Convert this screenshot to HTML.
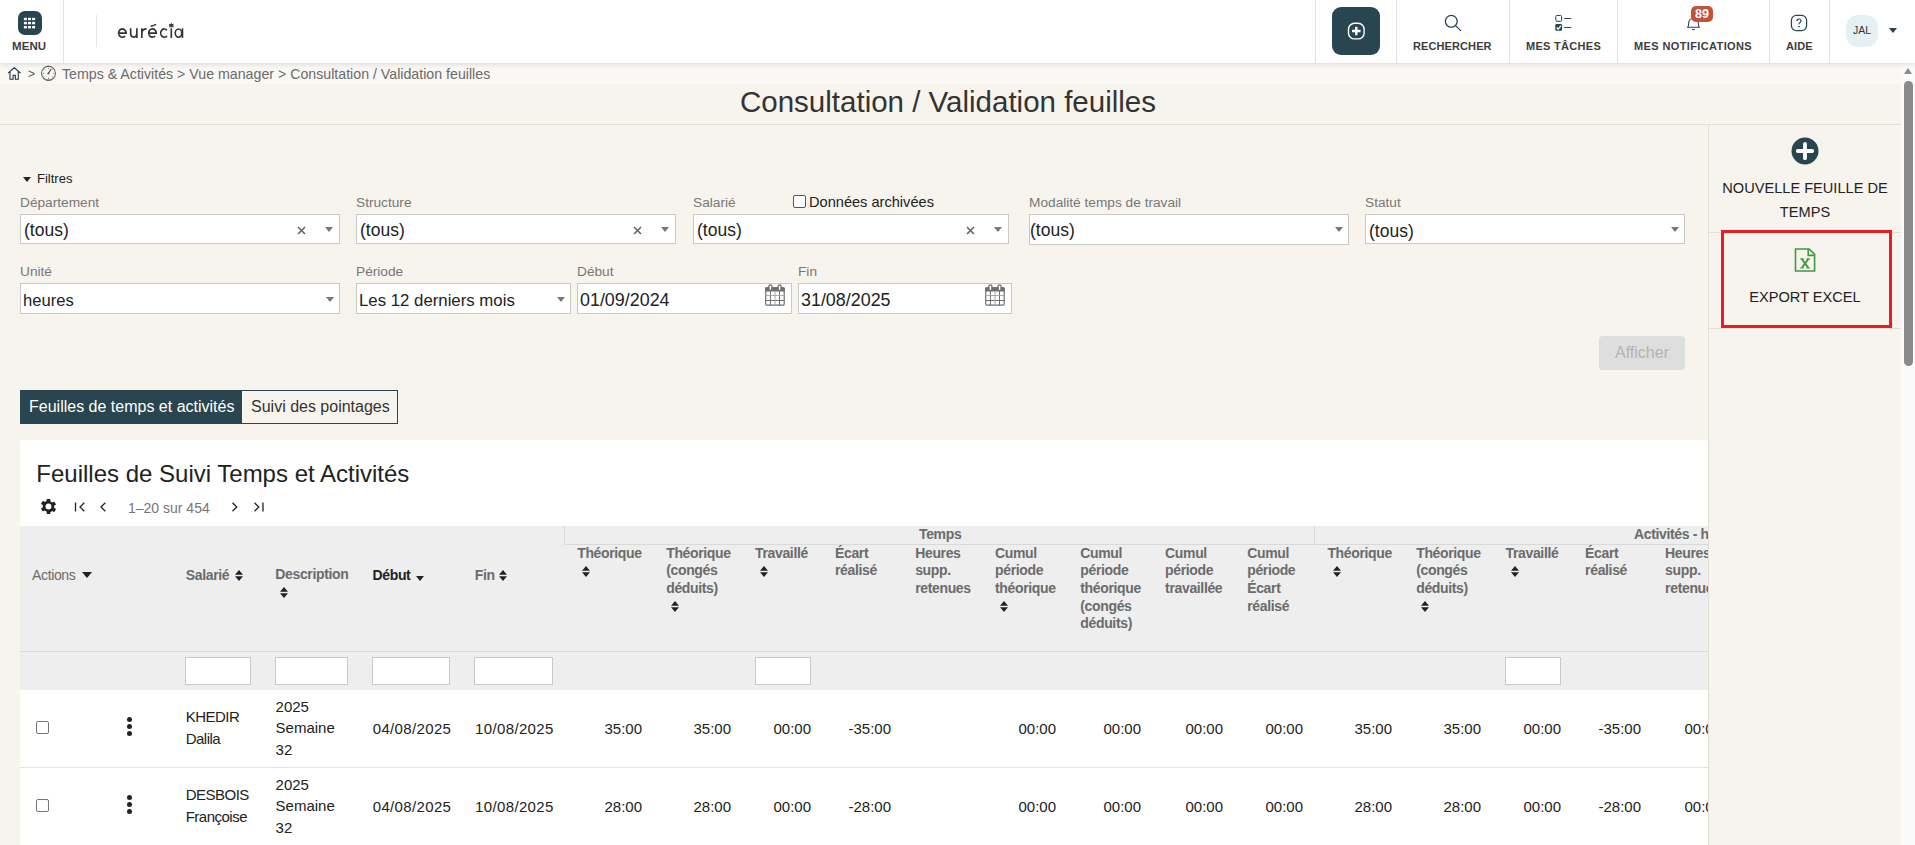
<!DOCTYPE html>
<html><head><meta charset="utf-8">
<style>
*{box-sizing:border-box;margin:0;padding:0}
html,body{width:1915px;height:845px;overflow:hidden;background:#f7f4ee;font-family:"Liberation Sans",sans-serif;color:#222}
.abs{position:absolute}
#hdr{position:absolute;left:0;top:0;width:1915px;height:63px;background:#fff;box-shadow:0 1px 5px rgba(30,45,50,.16);z-index:5}
.vsep{position:absolute;top:0;width:1px;height:63px;background:#e6e2d8}
.hlbl{position:absolute;top:39px;font-size:11px;font-weight:bold;color:#3d3d3d;letter-spacing:0.1px;white-space:nowrap;line-height:14px}
.lbl{position:absolute;font-size:13.7px;color:#777;white-space:nowrap;line-height:15px}
.sel{position:absolute;height:30px;background:#fff;border:1px solid #c9c9c9}
.sel .v{position:absolute;left:3px;top:5px;font-size:17.5px;color:#222;line-height:20px;white-space:nowrap}
.x{position:absolute;top:10.5px;width:9px;height:9px;margin-left:0.8px}
.dd{position:absolute;top:12px;margin-left:1px;width:0;height:0;border-left:4.5px solid transparent;border-right:4.5px solid transparent;border-top:5px solid #777}
.th{position:absolute;font-size:14px;font-weight:bold;color:#6b6b6b;line-height:17.65px;white-space:nowrap;letter-spacing:-0.35px}
.sort{display:block;width:8px;height:12px}
.td{position:absolute;font-size:15px;color:#222;line-height:21.7px;white-space:nowrap}
.fin{position:absolute;top:657px;height:28px;background:#fff;border:1px solid #c9c9c9}
</style></head><body>

<!-- HEADER -->
<div id="hdr">
  <div class="abs" style="left:18px;top:11px;width:24px;height:24px;border-radius:7px;background:#29454f">
    <svg width="24" height="24" viewBox="0 0 24 24" style="position:absolute;left:0;top:0">
      <g fill="#fff"><rect x="5.9" y="6.8" width="3" height="2.4"/><rect x="10" y="6.8" width="3" height="2.4"/><rect x="14.1" y="6.8" width="3" height="2.4"/><rect x="5.9" y="10.9" width="3" height="2.4"/><rect x="10" y="10.9" width="3" height="2.4"/><rect x="14.1" y="10.9" width="3" height="2.4"/><rect x="5.9" y="15.0" width="3" height="2.4"/><rect x="10" y="15.0" width="3" height="2.4"/><rect x="14.1" y="15.0" width="3" height="2.4"/></g>
    </svg>
  </div>
  <div class="hlbl" style="left:12px;top:39px;font-size:11.5px">MENU</div>
  <div class="vsep" style="left:63px;background:#e8e4da"></div>
  <div class="abs" style="left:96px;top:15px;width:1px;height:32px;background:#e6e6e6"></div>
  <svg class="abs" style="left:110px;top:15px" width="80" height="30" viewBox="0 0 80 30"><g fill="none" stroke="#333" stroke-width="1.65">
<path d="M8.5 18.1H16.2A3.85 4.15 0 1 0 15.1 21.0"/>
<path d="M20.65 13.3V18.8A3.1 3.3 0 0 0 26.85 18.8M26.85 13.3V22.9"/>
<path d="M31.85 13.3V22.9M31.85 17.8Q32.3 13.9 36.6 13.9"/>
<path d="M38.65 18.1H46.35A3.85 4.15 0 1 0 45.2 21.0"/>
<path d="M40.6 11.3Q44 10.6 46.1 9.4" stroke-width="1.4"/>
<path d="M57.0 15.3A3.6 4.15 0 1 0 57.0 20.9"/>
<path d="M61.3 13.3V22.9"/>
<ellipse cx="68.5" cy="18.1" rx="3.25" ry="4.15"/>
<path d="M72.45 13.3V22.9"/>
<path d="M61.35 8.2V11.6M59.2 9.2L63.5 10.8M63.5 9.2L59.2 10.8M59.1 11.7H63.6" stroke-width="1.1"/>
</g></svg>

  <div class="vsep" style="left:1315px"></div>
  <div class="abs" style="left:1332px;top:7px;width:48px;height:48px;border-radius:9px;background:#29454f">
    <svg width="48" height="48" viewBox="0 0 48 48" style="position:absolute;left:0;top:0">
      <rect x="16.5" y="16.3" width="15.6" height="15.6" rx="6" fill="none" stroke="#fff" stroke-width="1.4"/>
      <path d="M24.3 19.8v8.4M20 24h8.6" stroke="#fff" stroke-width="2.3"/>
    </svg>
  </div>
  <div class="vsep" style="left:1396px"></div>
  <svg class="abs" style="left:1444px;top:14px" width="18" height="18" viewBox="0 0 18 18">
    <circle cx="7.3" cy="7.3" r="5.9" fill="none" stroke="#29454f" stroke-width="1.3"/>
    <path d="M11.6 11.6l5 5" stroke="#29454f" stroke-width="1.3" stroke-linecap="round"/>
  </svg>
  <div class="hlbl" style="left:1413px">RECHERCHER</div>
  <div class="vsep" style="left:1509px"></div>
  <svg class="abs" style="left:1554px;top:14px" width="18" height="18" viewBox="0 0 18 18">
    <rect x="1.8" y="1.5" width="5.8" height="5.8" rx="1" fill="none" stroke="#29454f" stroke-width="1"/>
    <rect x="1.3" y="10" width="6.8" height="6.7" rx="1.2" fill="#29454f"/>
    <path d="M2.7 13.5l1.5 1.7 2.8-3.6" stroke="#fff" stroke-width="1.2" fill="none"/>
    <path d="M10.2 4.5h7.1M10.2 13.5h7.1" stroke="#29454f" stroke-width="1"/>
  </svg>
  <div class="hlbl" style="left:1526px;letter-spacing:0.3px">MES T&Acirc;CHES</div>
  <div class="vsep" style="left:1617px"></div>
  <svg class="abs" style="left:1686px;top:15px" width="15" height="16" viewBox="0 0 15 16">
    <path d="M1.5 12.2c1-0.6 1.2-2 1.2-4.2 0-2.7 1.9-4.8 4.8-4.8s4.8 2.1 4.8 4.8c0 2.2.2 3.6 1.2 4.2z" fill="none" stroke="#29454f" stroke-width="1.1" stroke-linejoin="round"/>
    <path d="M6.2 14.2q1.3 1.1 2.6 0" fill="none" stroke="#29454f" stroke-width="1.1"/>
  </svg>
  <div class="abs" style="left:1691px;top:6px;width:22px;height:16px;border-radius:5px;background:#c4523a;color:#fff;font-size:12.5px;font-weight:bold;text-align:center;line-height:17px">89</div>
  <div class="hlbl" style="left:1634px;letter-spacing:0.38px">MES NOTIFICATIONS</div>
  <div class="vsep" style="left:1769px"></div>
  <svg class="abs" style="left:1790px;top:14px" width="18" height="18" viewBox="0 0 18 18">
    <rect x="1.4" y="1.4" width="15.2" height="15.2" rx="5" fill="none" stroke="#29454f" stroke-width="1.2"/>
    <path d="M7 7.1q0-2.1 2-2.1t2 1.9q0 1.2-1.2 1.8-.8.4-.8 1.5" fill="none" stroke="#29454f" stroke-width="1.2"/>
    <circle cx="9" cy="12.6" r="0.8" fill="#29454f"/>
  </svg>
  <div class="hlbl" style="left:1786px">AIDE</div>
  <div class="vsep" style="left:1829px"></div>
  <div class="abs" style="left:1846px;top:15px;width:32px;height:32px;border-radius:12px;background:#e5f0f2;color:#333;font-size:10.5px;text-align:center;line-height:31px">JAL</div>
  <div class="abs" style="left:1889px;top:28px;width:0;height:0;border-left:4px solid transparent;border-right:4px solid transparent;border-top:5px solid #29454f"></div>
</div>

<!-- breadcrumb band -->
<div class="abs" style="left:0;top:63px;width:1901px;height:21px;background:#faf8f4"></div>
<svg class="abs" style="left:7px;top:66.6px" width="14" height="14" viewBox="0 0 14 14">
  <path d="M1 6.2L7.3 0.8 13.6 6.2M3 4.6V12.2H6.1V8.2H8.3V12.2H11.3V4.6" fill="none" stroke="#1f2f38" stroke-width="1.05" stroke-linejoin="miter"/>
</svg>
<div class="abs" style="left:28px;top:67px;font-size:12px;color:#555;line-height:14px">&gt;</div>
<svg class="abs" style="left:40px;top:65px" width="17" height="17" viewBox="0 0 17 17">
  <circle cx="8.5" cy="8.3" r="7" fill="none" stroke="#666" stroke-width="1.1"/>
  <path d="M6.6 1.4h3.8M6.6 15.2h3.8" stroke="#555" stroke-width="1"/>
  <g fill="#666"><circle cx="3.3" cy="8.3" r="0.6"/><circle cx="13.7" cy="8.3" r="0.6"/><circle cx="8.5" cy="13.3" r="0.6"/><circle cx="8.5" cy="3.4" r="0.5"/>
  <circle cx="4.9" cy="4.8" r="0.45"/><circle cx="12.1" cy="4.8" r="0.45"/><circle cx="4.9" cy="11.8" r="0.45"/><circle cx="12.1" cy="11.8" r="0.45"/></g>
  <path d="M8.4 8.4L11 4.2" stroke="#555" stroke-width="1.2" stroke-linecap="round"/>
  <circle cx="8.4" cy="8.4" r="1" fill="#555"/>
</svg>
<div class="abs" style="left:62px;top:65.5px;font-size:14.2px;color:#6b6b6b;line-height:16px;white-space:nowrap">Temps &amp; Activit&eacute;s &gt; Vue manager &gt; Consultation / Validation feuilles</div>

<!-- Title -->
<div class="abs" style="left:0;top:84px;width:1901px;height:41px;border-bottom:1px solid #e2dfd7"></div>
<div class="abs" style="left:740px;top:86.2px;font-size:29.5px;color:#333;line-height:32px;white-space:nowrap">Consultation / Validation feuilles</div>

<!-- sidebar -->
<div class="abs" style="left:1708px;top:125px;width:1px;height:720px;background:#e2dfd7"></div>
<svg class="abs" style="left:1791px;top:137px" width="28" height="28" viewBox="0 0 28 28">
  <circle cx="14" cy="14" r="13.5" fill="#29454f"/>
  <path d="M14 6.8v14.4M6.8 14h14.4" stroke="#fff" stroke-width="3.8" stroke-linecap="round"/>
</svg>
<div class="abs" style="left:1709px;top:176px;width:192px;text-align:center;font-size:14.6px;color:#222;line-height:24px">NOUVELLE FEUILLE DE<br>TEMPS</div>
<div class="abs" style="left:1709px;top:232px;width:192px;height:1px;background:#e2dfd7"></div>
<svg class="abs" style="left:1794px;top:248px" width="22" height="24" viewBox="0 0 22 24">
  <g fill="none" stroke="#3f9a40" stroke-width="1.6">
  <path d="M1.5 1H15.2L20.6 6.4V23H1.5Z" stroke-linejoin="miter"/>
  <path d="M14.2 1V7.4H20.6"/>
  <path d="M8 11.2L14.2 19.6M14.2 11.2L8 19.6" stroke-width="1.9"/>
  <path d="M6.4 11H9.6M12.6 11H15.8M6.4 19.8H9.6M12.6 19.8H15.8" stroke-width="1.3"/>
  </g>
</svg>
<div class="abs" style="left:1709px;top:285px;width:192px;text-align:center;font-size:14.6px;color:#222;line-height:24px">EXPORT EXCEL</div>
<div class="abs" style="left:1709px;top:328px;width:192px;height:1px;background:#e2dfd7"></div>
<div class="abs" style="left:1721px;top:230px;width:171px;height:98px;border:3px solid #e41e25"></div>

<!-- scrollbar -->
<div class="abs" style="left:1901px;top:63px;width:14px;height:782px;background:#fafafa"></div>
<div class="abs" style="left:1904px;top:68px;width:0;height:0;border-left:4.5px solid transparent;border-right:4.5px solid transparent;border-bottom:6px solid #8a8a8a"></div>
<div class="abs" style="left:1904px;top:81px;width:9px;height:285px;border-radius:4.5px;background:#8a8a8a"></div>

<!-- FILTERS -->
<div class="abs" style="left:23px;top:176.5px;width:0;height:0;border-left:4.5px solid transparent;border-right:4.5px solid transparent;border-top:5px solid #222"></div>
<div class="abs" style="left:37px;top:171px;font-size:13px;color:#222;line-height:15px">Filtres</div>

<div class="lbl" style="left:20px;top:195px">D&eacute;partement</div>
<div class="sel" style="left:20px;top:214px;width:320px;height:30px"><div class="v">(tous)</div>
  <svg class="x" style="left:275px" viewBox="0 0 9 9"><path d="M1 1l7 7M8 1L1 8" stroke="#666" stroke-width="1.6"/></svg>
  <div class="dd" style="left:303px"></div></div>

<div class="lbl" style="left:356px;top:195px">Structure</div>
<div class="sel" style="left:356px;top:214px;width:320px;height:30px"><div class="v">(tous)</div>
  <svg class="x" style="left:275px" viewBox="0 0 9 9"><path d="M1 1l7 7M8 1L1 8" stroke="#666" stroke-width="1.6"/></svg>
  <div class="dd" style="left:303px"></div></div>

<div class="lbl" style="left:693px;top:195px">Salari&eacute;</div>
<div class="abs" style="left:793px;top:195px;width:13px;height:13px;border:1px solid #555;border-radius:2px;background:#fff"></div>
<div class="abs" style="left:809px;top:194px;font-size:14.6px;color:#222;line-height:17px;white-space:nowrap">Donn&eacute;es archiv&eacute;es</div>
<div class="sel" style="left:693px;top:214px;width:316px;height:30px"><div class="v">(tous)</div>
  <svg class="x" style="left:271px" viewBox="0 0 9 9"><path d="M1 1l7 7M8 1L1 8" stroke="#666" stroke-width="1.6"/></svg>
  <div class="dd" style="left:299px"></div></div>

<div class="lbl" style="left:1029px;top:195px">Modalit&eacute; temps de travail</div>
<div class="sel" style="left:1029px;top:214px;width:320px;height:31px"><div class="v" style="left:0px">(tous)</div>
  <div class="dd" style="left:304px"></div></div>

<div class="lbl" style="left:1365px;top:195px">Statut</div>
<div class="sel" style="left:1365px;top:214px;width:320px;height:30px"><div class="v" style="top:6px">(tous)</div>
  <div class="dd" style="left:304px"></div></div>

<div class="lbl" style="left:20px;top:264px">Unit&eacute;</div>
<div class="sel" style="left:20px;top:283px;width:320px;height:31px"><div class="v" style="left:2px;top:7px;font-size:16.6px">heures</div>
  <div class="dd" style="left:304px;top:13px"></div></div>

<div class="lbl" style="left:356px;top:264px">P&eacute;riode</div>
<div class="sel" style="left:356px;top:283px;width:215px;height:31px"><div class="v" style="left:2px;top:7px;font-size:16.8px">Les 12 derniers mois</div>
  <div class="dd" style="left:199px;top:13px"></div></div>

<div class="lbl" style="left:577px;top:264px">D&eacute;but</div>
<div class="sel" style="left:577px;top:283px;width:215px;height:31px"><div class="v" style="left:2px;top:5.5px;font-size:17.9px">01/09/2024</div>
  <svg class="abs" style="left:186px;top:0px" width="22" height="23" viewBox="0 0 22 23"><g>
    <rect x="1.7" y="3.8" width="18.5" height="17.4" rx="1.3" fill="#fff" stroke="#6f6f6f" stroke-width="1.2"/>
    <rect x="1.1" y="3.2" width="19.7" height="4.4" rx="1" fill="#6f6f6f"/>
    <path d="M6.4 7v14.5M15.5 7v14.5M1.5 16.5h19" stroke="#6f6f6f" stroke-width="1"/>
    <path d="M11 7v14.5M1.5 11.5h19" stroke="#a8a8a8" stroke-width="1"/>
    <rect x="4.3" y="0.2" width="4.2" height="6.2" rx="2.1" fill="#6f6f6f"/><rect x="5.65" y="1.5" width="1.5" height="4.6" rx="0.75" fill="#fff"/>
    <rect x="13.5" y="0.2" width="4.2" height="6.2" rx="2.1" fill="#6f6f6f"/><rect x="14.85" y="1.5" width="1.5" height="4.6" rx="0.75" fill="#fff"/>
    </g></svg>
</div>

<div class="lbl" style="left:798px;top:264px">Fin</div>
<div class="sel" style="left:798px;top:283px;width:214px;height:31px"><div class="v" style="left:2px;top:5.5px;font-size:17.9px">31/08/2025</div>
  <svg class="abs" style="left:185px;top:0px" width="22" height="23" viewBox="0 0 22 23"><g>
    <rect x="1.7" y="3.8" width="18.5" height="17.4" rx="1.3" fill="#fff" stroke="#6f6f6f" stroke-width="1.2"/>
    <rect x="1.1" y="3.2" width="19.7" height="4.4" rx="1" fill="#6f6f6f"/>
    <path d="M6.4 7v14.5M15.5 7v14.5M1.5 16.5h19" stroke="#6f6f6f" stroke-width="1"/>
    <path d="M11 7v14.5M1.5 11.5h19" stroke="#a8a8a8" stroke-width="1"/>
    <rect x="4.3" y="0.2" width="4.2" height="6.2" rx="2.1" fill="#6f6f6f"/><rect x="5.65" y="1.5" width="1.5" height="4.6" rx="0.75" fill="#fff"/>
    <rect x="13.5" y="0.2" width="4.2" height="6.2" rx="2.1" fill="#6f6f6f"/><rect x="14.85" y="1.5" width="1.5" height="4.6" rx="0.75" fill="#fff"/>
    </g></svg>
</div>

<div class="abs" style="left:1599px;top:336px;width:86px;height:34px;border-radius:4px;background:#dedede;color:#b3b3b3;font-size:16px;line-height:34px;text-align:center">Afficher</div>

<!-- tabs -->
<div class="abs" style="left:20px;top:390px;width:378px;height:34px;border:1px solid #29454f;background:#f7f4ee"></div>
<div class="abs" style="left:20px;top:390px;width:222px;height:34px;background:#29454f;color:#fff;font-size:16px;line-height:34px;padding-left:9px;white-space:nowrap">Feuilles de temps et activit&eacute;s</div>
<div class="abs" style="left:251px;top:390px;font-size:16px;line-height:34px;color:#333;white-space:nowrap">Suivi des pointages</div>

<!-- TABLE PANEL -->
<div class="abs" style="left:20px;top:440px;width:1688px;height:405px;background:#fff;overflow:hidden">
<div class="abs" style="left:16.3px;top:21px;font-size:24px;color:#222;line-height:26px;white-space:nowrap">Feuilles de Suivi Temps et Activit&eacute;s</div>
<svg class="abs" style="left:20px;top:58px" width="17" height="17" viewBox="0 0 16 16">
  <path fill="#222" fill-rule="evenodd" d="M6.3 1h3.4v2.1l1.9 1.1 1.8-1 1.7 2.9-1.8 1.1v2.1l1.8 1.1-1.7 2.9-1.8-1-1.9 1.1V15H6.3v-2.1l-1.9-1.1-1.8 1L.9 9.9l1.8-1.1V6.7L.9 5.6l1.7-2.9 1.8 1 1.9-1.1zM8 5.2a2.8 2.8 0 100 5.6 2.8 2.8 0 100-5.6z"/>
</svg>
<svg class="abs" style="left:53.7px;top:61.6px" width="12" height="10" viewBox="0 0 12 10"><path d="M1.5 0.5v9M10.3 0.7L6 5l4.3 4.3" fill="none" stroke="#222" stroke-width="1.3"/></svg>
<svg class="abs" style="left:79.3px;top:61.6px" width="8" height="10" viewBox="0 0 8 10"><path d="M6.3 0.7L2 5l4.3 4.3" fill="none" stroke="#222" stroke-width="1.3"/></svg>
<div class="abs" style="left:108px;top:60px;font-size:14px;color:#757575;line-height:17px;white-space:nowrap">1&ndash;20 sur 454</div>
<svg class="abs" style="left:211px;top:62px" width="8" height="10" viewBox="0 0 8 10"><path d="M1.5 0.7L5.8 5 1.5 9.3" fill="none" stroke="#222" stroke-width="1.3"/></svg>
<svg class="abs" style="left:233.3px;top:61.8px" width="12" height="10" viewBox="0 0 12 10"><path d="M1.5 0.7L5.8 5 1.5 9.3M10 0.5v9" fill="none" stroke="#222" stroke-width="1.3"/></svg>

<!-- header bg -->
<div class="abs" style="left:0;top:86px;width:1688px;height:125px;background:#eee"></div>
<div class="abs" style="left:0;top:211px;width:1688px;height:1px;background:#d9d9d9"></div>
<div class="abs" style="left:0;top:212px;width:1688px;height:38px;background:#eee"></div>
<div class="abs" style="left:0;top:327px;width:1688px;height:1px;background:#e3e3e3"></div>
<!-- group headers -->
<div class="abs" style="left:544px;top:86px;width:751px;height:19px;border-left:1px solid #d9d9d9;border-right:1px solid #d9d9d9;border-bottom:1px solid #d9d9d9"></div>
<div class="abs" style="left:1295px;top:104px;width:400px;height:1px;background:#d9d9d9"></div>
<div class="th" style="left:899px;top:86px">Temps</div>
<div class="th" style="left:1614px;top:86px">Activit&eacute;s - heures</div>
<!--COLSTART-->
<div class="th" style="left:12px;top:127.0px;font-weight:normal">Actions</div>
<div class="abs" style="left:61.8px;top:131.6px;width:0;height:0;border-left:5px solid transparent;border-right:5px solid transparent;border-top:6px solid #222"></div>
<div class="th" style="left:165.8px;top:127.0px">Salari&eacute;</div>
<svg class="abs" style="left:214.8px;top:129.5px" width="8" height="12" viewBox="0 0 8 12"><path d="M0 4.7L4 0 8 4.7zM0 6.3h8L4 11z" fill="#222"/></svg>
<div class="th" style="left:255.3px;top:125.9px">Description</div>
<svg class="abs" style="left:260.4px;top:146.7px" width="8" height="12" viewBox="0 0 8 12"><path d="M0 4.7L4 0 8 4.7zM0 6.3h8L4 11z" fill="#222"/></svg>
<div class="th" style="left:352.5px;top:127.0px;color:#222">D&eacute;but</div>
<div class="abs" style="left:395.5px;top:135.8px;width:0;height:0;border-left:4.5px solid transparent;border-right:4.5px solid transparent;border-top:5px solid #222"></div>
<div class="th" style="left:454.7px;top:127.0px">Fin</div>
<svg class="abs" style="left:479.2px;top:129.5px" width="8" height="12" viewBox="0 0 8 12"><path d="M0 4.7L4 0 8 4.7zM0 6.3h8L4 11z" fill="#222"/></svg>
<div class="th" style="left:557.2px;top:104.8px">Th&eacute;orique</div>
<svg class="abs" style="left:562.4px;top:125.7px" width="8" height="12" viewBox="0 0 8 12"><path d="M0 4.7L4 0 8 4.7zM0 6.3h8L4 11z" fill="#222"/></svg>
<div class="th" style="left:646.2px;top:104.8px">Th&eacute;orique<br>(cong&eacute;s<br>d&eacute;duits)</div>
<svg class="abs" style="left:651.4px;top:161.1px" width="8" height="12" viewBox="0 0 8 12"><path d="M0 4.7L4 0 8 4.7zM0 6.3h8L4 11z" fill="#222"/></svg>
<div class="th" style="left:735.0px;top:104.8px">Travaill&eacute;</div>
<svg class="abs" style="left:740.2px;top:125.7px" width="8" height="12" viewBox="0 0 8 12"><path d="M0 4.7L4 0 8 4.7zM0 6.3h8L4 11z" fill="#222"/></svg>
<div class="th" style="left:815.0px;top:104.8px">&Eacute;cart<br>r&eacute;alis&eacute;</div>
<div class="th" style="left:895.2px;top:104.8px">Heures<br>supp.<br>retenues</div>
<div class="th" style="left:975.0px;top:104.8px">Cumul<br>p&eacute;riode<br>th&eacute;orique</div>
<svg class="abs" style="left:980.2px;top:161.1px" width="8" height="12" viewBox="0 0 8 12"><path d="M0 4.7L4 0 8 4.7zM0 6.3h8L4 11z" fill="#222"/></svg>
<div class="th" style="left:1060.3px;top:104.8px">Cumul<br>p&eacute;riode<br>th&eacute;orique<br>(cong&eacute;s<br>d&eacute;duits)</div>
<div class="th" style="left:1145.1px;top:104.8px">Cumul<br>p&eacute;riode<br>travaill&eacute;e</div>
<div class="th" style="left:1227.2px;top:104.8px">Cumul<br>p&eacute;riode<br>&Eacute;cart<br>r&eacute;alis&eacute;</div>
<div class="th" style="left:1307.4px;top:104.8px">Th&eacute;orique</div>
<svg class="abs" style="left:1312.6px;top:125.7px" width="8" height="12" viewBox="0 0 8 12"><path d="M0 4.7L4 0 8 4.7zM0 6.3h8L4 11z" fill="#222"/></svg>
<div class="th" style="left:1396.2px;top:104.8px">Th&eacute;orique<br>(cong&eacute;s<br>d&eacute;duits)</div>
<svg class="abs" style="left:1401.4px;top:161.1px" width="8" height="12" viewBox="0 0 8 12"><path d="M0 4.7L4 0 8 4.7zM0 6.3h8L4 11z" fill="#222"/></svg>
<div class="th" style="left:1485.5px;top:104.8px">Travaill&eacute;</div>
<svg class="abs" style="left:1490.7px;top:125.7px" width="8" height="12" viewBox="0 0 8 12"><path d="M0 4.7L4 0 8 4.7zM0 6.3h8L4 11z" fill="#222"/></svg>
<div class="th" style="left:1565.1px;top:104.8px">&Eacute;cart<br>r&eacute;alis&eacute;</div>
<div class="th" style="left:1645.1px;top:104.8px">Heures<br>supp.<br>retenues</div>
<div class="fin" style="left:165px;top:217px;width:66px"></div>
<div class="fin" style="left:255px;top:217px;width:73px"></div>
<div class="fin" style="left:352px;top:217px;width:78px"></div>
<div class="fin" style="left:454px;top:217px;width:79px"></div>
<div class="fin" style="left:735px;top:217px;width:56px"></div>
<div class="fin" style="left:1485px;top:217px;width:56px"></div>
<div class="abs" style="left:16px;top:281px;width:13px;height:13px;border:1px solid #767676;border-radius:2px;background:#fff"></div>
<div class="abs" style="left:107px;top:276.8px;width:5px;height:5px;border-radius:50%;background:#222"></div>
<div class="abs" style="left:107px;top:284.0px;width:5px;height:5px;border-radius:50%;background:#222"></div>
<div class="abs" style="left:107px;top:291.1px;width:5px;height:5px;border-radius:50%;background:#222"></div>
<div class="td" style="left:165.7px;top:266.2px;letter-spacing:-0.5px">KHEDIR<br>Dalila</div>
<div class="td" style="left:255.6px;top:255.5px">2025<br>Semaine<br>32</div>
<div class="td" style="left:352.7px;top:277.9px;letter-spacing:0.35px">04/08/2025</div>
<div class="td" style="left:455.1px;top:277.9px;letter-spacing:0.35px">10/08/2025</div>
<div class="td" style="left:422px;width:200px;text-align:right;top:277.9px">35:00</div>
<div class="td" style="left:511px;width:200px;text-align:right;top:277.9px">35:00</div>
<div class="td" style="left:591px;width:200px;text-align:right;top:277.9px">00:00</div>
<div class="td" style="left:671px;width:200px;text-align:right;top:277.9px">-35:00</div>
<div class="td" style="left:836px;width:200px;text-align:right;top:277.9px">00:00</div>
<div class="td" style="left:921px;width:200px;text-align:right;top:277.9px">00:00</div>
<div class="td" style="left:1003px;width:200px;text-align:right;top:277.9px">00:00</div>
<div class="td" style="left:1083px;width:200px;text-align:right;top:277.9px">00:00</div>
<div class="td" style="left:1172px;width:200px;text-align:right;top:277.9px">35:00</div>
<div class="td" style="left:1261px;width:200px;text-align:right;top:277.9px">35:00</div>
<div class="td" style="left:1341px;width:200px;text-align:right;top:277.9px">00:00</div>
<div class="td" style="left:1421px;width:200px;text-align:right;top:277.9px">-35:00</div>
<div class="td" style="left:1502px;width:200px;text-align:right;top:277.9px">00:00</div>
<div class="abs" style="left:16px;top:359px;width:13px;height:13px;border:1px solid #767676;border-radius:2px;background:#fff"></div>
<div class="abs" style="left:107px;top:354.8px;width:5px;height:5px;border-radius:50%;background:#222"></div>
<div class="abs" style="left:107px;top:362.0px;width:5px;height:5px;border-radius:50%;background:#222"></div>
<div class="abs" style="left:107px;top:369.1px;width:5px;height:5px;border-radius:50%;background:#222"></div>
<div class="td" style="left:165.7px;top:344.2px;letter-spacing:-0.5px">DESBOIS<br>Fran&ccedil;oise</div>
<div class="td" style="left:255.6px;top:333.5px">2025<br>Semaine<br>32</div>
<div class="td" style="left:352.7px;top:355.9px;letter-spacing:0.35px">04/08/2025</div>
<div class="td" style="left:455.1px;top:355.9px;letter-spacing:0.35px">10/08/2025</div>
<div class="td" style="left:422px;width:200px;text-align:right;top:355.9px">28:00</div>
<div class="td" style="left:511px;width:200px;text-align:right;top:355.9px">28:00</div>
<div class="td" style="left:591px;width:200px;text-align:right;top:355.9px">00:00</div>
<div class="td" style="left:671px;width:200px;text-align:right;top:355.9px">-28:00</div>
<div class="td" style="left:836px;width:200px;text-align:right;top:355.9px">00:00</div>
<div class="td" style="left:921px;width:200px;text-align:right;top:355.9px">00:00</div>
<div class="td" style="left:1003px;width:200px;text-align:right;top:355.9px">00:00</div>
<div class="td" style="left:1083px;width:200px;text-align:right;top:355.9px">00:00</div>
<div class="td" style="left:1172px;width:200px;text-align:right;top:355.9px">28:00</div>
<div class="td" style="left:1261px;width:200px;text-align:right;top:355.9px">28:00</div>
<div class="td" style="left:1341px;width:200px;text-align:right;top:355.9px">00:00</div>
<div class="td" style="left:1421px;width:200px;text-align:right;top:355.9px">-28:00</div>
<div class="td" style="left:1502px;width:200px;text-align:right;top:355.9px">00:00</div>
<div class="abs" style="left:0;top:327px;width:1688px;height:1px;background:#e3e3e3"></div>
<!--COLEND-->
</div>


</body></html>
